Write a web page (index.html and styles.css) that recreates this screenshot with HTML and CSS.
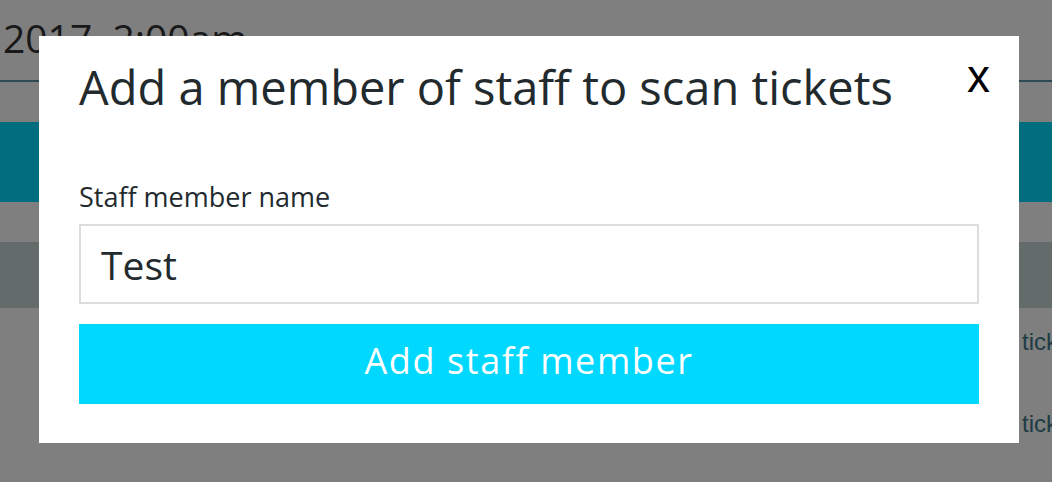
FILE: index.html
```html
<!DOCTYPE html>
<html>
<head>
<meta charset="utf-8">
<link rel="stylesheet" href="styles.css">
</head>
<body>
<div class="page">
  <header class="page-head">
    <div class="date">2017, 2:00am</div>
  </header>
  <div class="band-cyan"></div>
  <div class="band-grey"></div>
  <div class="row"><span class="row-text">tickets scanned</span></div>
  <div class="row"><span class="row-text">tickets scanned</span></div>
</div>
<div class="overlay">
  <div class="modal">
    <div class="modal-head">
      <h1 class="modal-title">Add a member of staff to scan tickets</h1>
      <button class="close">x</button>
    </div>
    <label class="field-label" for="name">Staff member name</label>
    <input class="field-input" id="name" type="text" value="Test">
    <button class="submit">Add staff member</button>
  </div>
</div>
</body>
</html>
```
FILE: styles.css
```css
html, body {
  margin: 0;
  padding: 0;
  width: 1052px;
  height: 482px;
  overflow: hidden;
  background: #ffffff;
  font-family: "Open Sans", "Noto Sans", sans-serif;
}
.page {
  width: 1052px;
  overflow: hidden;
}
.page-head {
  box-sizing: border-box;
  height: 82px;
  border-bottom: 2px solid #5a94aa;
}
.date {
  padding-left: 3px;
  padding-top: 11px;
  font-size: 39px;
  line-height: 53px;
  color: #333333;
  white-space: nowrap;
}
.band-cyan {
  margin-top: 40px;
  height: 80px;
  background: #00dcff;
}
.band-grey {
  margin-top: 40px;
  height: 66px;
  background: #c6d6d6;
}
.row {
  height: 82px;
  box-sizing: border-box;
  padding: 22px 0 0 1022px;
  white-space: nowrap;
}
.row-text {
  display: block;
  font-family: "Liberation Sans", Arial, sans-serif;
  font-size: 24px;
  line-height: 24px;
  color: #3c7888;
}
.overlay {
  position: fixed;
  inset: 0;
  background: rgba(0, 0, 0, 0.5);
}
.modal {
  position: absolute;
  left: 39px;
  top: 36px;
  width: 980px;
  height: 407px;
  box-sizing: border-box;
  padding: 19px 40px 0;
  background: #ffffff;
  display: flex;
  flex-direction: column;
}
.modal-head {
  display: flex;
  justify-content: space-between;
  align-items: flex-start;
}
.modal-title {
  margin: 0;
  font-weight: 400;
  font-size: 47px;
  line-height: 64px;
  color: #222a2d;
  white-space: nowrap;
}
.close {
  border: 0;
  background: none;
  padding: 0;
  margin-top: -2px;
  margin-right: -11px;
  font-family: "Liberation Sans", Arial, sans-serif;
  font-size: 46px;
  line-height: 46px;
  color: #000000;
}
.field-label {
  margin-top: 59px;
  font-size: 27px;
  line-height: 37px;
  color: #222a2d;
}
.field-input {
  margin-top: 9px;
  height: 80px;
  box-sizing: border-box;
  border: 2px solid #dddddd;
  padding: 0 20px;
  font-family: inherit;
  font-size: 39px;
  color: #222a2d;
  outline: none;
}
.submit {
  margin-top: 20px;
  height: 80px;
  border: 0;
  background: #00d8ff;
  color: #ffffff;
  font-family: inherit;
  font-size: 36px;
  letter-spacing: 1.6px;
  padding: 0 0 8px;
}
```
